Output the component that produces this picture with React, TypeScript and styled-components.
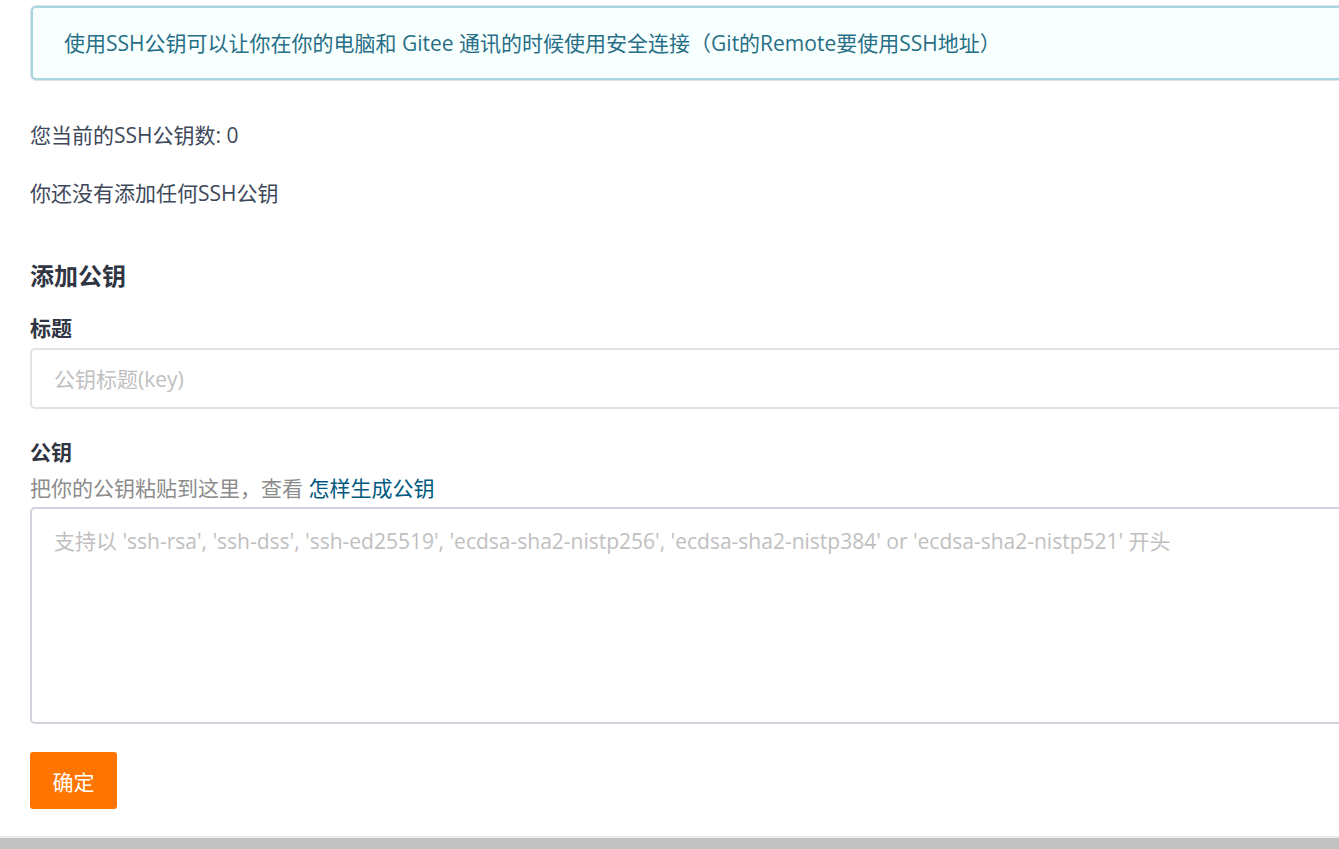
import React from "react";
import styled, { createGlobalStyle } from "styled-components";

const GlobalStyle = createGlobalStyle`
  html, body {
    margin: 0;
    padding: 0;
    overflow: hidden;
    background: #fff;
  }
  body {
    font-family: "Open Sans", "Noto Sans CJK SC", sans-serif;
    font-size: 21px;
    color: #40485b;
  }
  * {
    box-sizing: border-box;
  }
`;

const Page = styled.div`
  display: flex;
  flex-direction: column;
  min-height: 100vh;
  width: 1400px;
`;

const Main = styled.main`
  flex: 1;
  padding: 6px 0 0 30px;
`;

const InfoMessage = styled.div`
  margin-left: 1px;
  padding: 20px 31px;
  line-height: 30px;
  background: #f8ffff;
  color: #276f86;
  border: 2px solid #a9d5de;
  border-radius: 5px;
  box-shadow: 0 0 0 1px #dfe4e8;
`;

const Para = styled.p<{ top: number }>`
  margin: ${(p) => p.top}px 0 0;
  line-height: 30px;
`;

const Heading = styled.h3`
  margin: 53px 0 0;
  font-size: 24px;
  line-height: 30px;
  font-weight: 700;
  color: #2f3542;
`;

const Field = styled.div<{ top: number }>`
  display: flex;
  flex-direction: column;
  margin-top: ${(p) => p.top}px;
`;

const Label = styled.label`
  font-weight: 700;
  line-height: 30px;
  color: #2f3542;
`;

const Hint = styled.div`
  margin-top: 6px;
  line-height: 30px;
  color: #8c8c8c;

  a {
    color: #005980;
    text-decoration: none;
  }
`;

const TextInput = styled.input`
  margin-top: 5px;
  height: 61px;
  padding: 0 22px;
  border: 2px solid #dfe2e6;
  border-radius: 5px;
  font: inherit;
  color: #40485b;
  outline: none;

  &::placeholder {
    color: #c0c0c0;
  }
`;

const TextArea = styled.textarea`
  margin-top: 4px;
  height: 217px;
  padding: 17px 22px;
  border: 2px solid #cfd3dc;
  border-radius: 5px;
  font: inherit;
  line-height: 30px;
  color: #40485b;
  resize: none;
  outline: none;

  &::placeholder {
    color: #c0c0c0;
  }
`;

const SubmitButton = styled.button`
  margin-top: 28px;
  width: 87px;
  height: 57px;
  border: none;
  border-radius: 3px;
  background: #ff7500;
  color: #fff;
  font: inherit;
  cursor: pointer;
`;

const ScrollBar = styled.div`
  height: 13px;
  border-top: 2px solid #ebebeb;
  background: #c2c2c2;
`;

export default function App() {
  return (
    <>
      <GlobalStyle />
      <Page>
        <Main>
          <InfoMessage>
            使用SSH公钥可以让你在你的电脑和 Gitee 通讯的时候使用安全连接（Git的Remote要使用SSH地址）
          </InfoMessage>
          <Para top={40}>您当前的SSH公钥数: 0</Para>
          <Para top={28}>你还没有添加任何SSH公钥</Para>

          <Heading>添加公钥</Heading>
          <Field top={22}>
            <Label>标题</Label>
            <TextInput placeholder="公钥标题(key)" />
          </Field>
          <Field top={28}>
            <Label>公钥</Label>
            <Hint>
              把你的公钥粘贴到这里，查看 <a href="#">怎样生成公钥</a>
            </Hint>
            <TextArea placeholder="支持以 'ssh-rsa', 'ssh-dss', 'ssh-ed25519', 'ecdsa-sha2-nistp256', 'ecdsa-sha2-nistp384' or 'ecdsa-sha2-nistp521' 开头" />
          </Field>
          <SubmitButton>确定</SubmitButton>
        </Main>
        <ScrollBar />
      </Page>
    </>
  );
}
